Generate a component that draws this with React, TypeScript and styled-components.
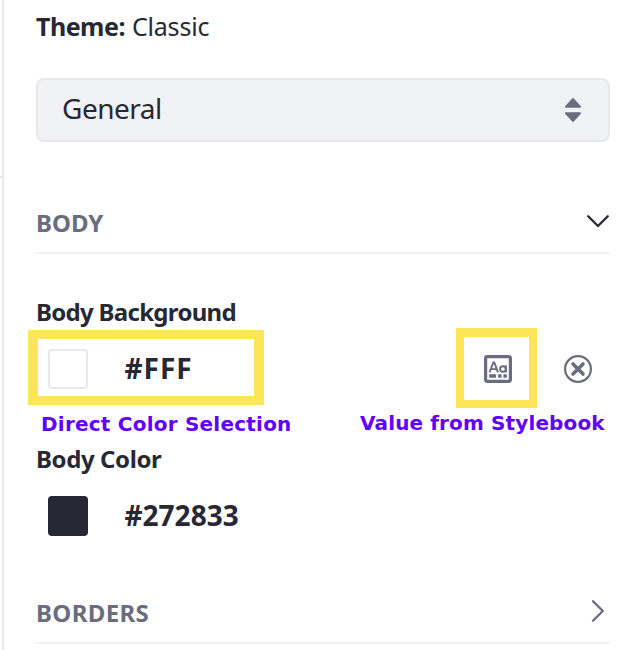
import React from 'react';
import styled, { createGlobalStyle } from 'styled-components';

const GlobalStyle = createGlobalStyle`
  * { box-sizing: border-box; }
  body { margin: 0; background: #fff; overflow: hidden; }
`;

const Page = styled.div`
  display: flex;
  width: 641px;
  height: 650px;
  overflow: hidden;
  background: #fff;
  color: #272833;
  font-family: 'Noto Sans', sans-serif;
`;

const Gutter = styled.div`
  width: 4px;
  flex: none;
  padding-top: 176px;
  border-right: 2px solid #e7e7ed;
`;

const GutterTick = styled.div`
  height: 2px;
  background: #e7e7ed;
`;

const Panel = styled.main`
  position: relative;
  flex: 1;
  display: flex;
  flex-direction: column;
  padding: 0 31px 0 32px;
`;

const Theme = styled.p`
  margin: 0;
  height: 78px;
  padding-top: 9px;
  display: flex;
  gap: 7px;
  font-size: 25px;
  line-height: 34px;
  letter-spacing: -0.2px;
`;

const ThemeLabel = styled.strong`
  letter-spacing: -0.5px;
`;

const Select = styled.button`
  display: flex;
  align-items: center;
  justify-content: space-between;
  height: 64px;
  flex: none;
  padding: 0 27px 4px 24px;
  border: 2px solid #e7e7ed;
  border-radius: 8px;
  background: #f1f2f5;
  color: inherit;
  font: 400 28px/40px 'Noto Sans', sans-serif;
  letter-spacing: -0.5px;
  svg { margin-top: 4px; }
`;

const SectionHeader = styled.h2<{ $space: number }>`
  display: flex;
  justify-content: space-between;
  flex: none;
  margin: ${(p) => p.$space}px 0 0;
  height: 48px;
  border-bottom: 2px solid #f1f2f5;
  color: #6b6c7e;
  font-size: 24px;
  font-weight: 700;
  line-height: 34px;
`;

const Spaced = styled.span<{ $spacing: number }>`
  letter-spacing: ${(p) => p.$spacing}px;
`;

const Field = styled.section<{ $space: number }>`
  margin-top: ${(p) => p.$space}px;
  flex: none;
`;

const FieldLabel = styled.div<{ $spacing: number }>`
  height: 52px;
  font-size: 24px;
  font-weight: 700;
  line-height: 30px;
  letter-spacing: ${(p) => p.$spacing}px;
`;

const ColorRow = styled.div`
  display: flex;
  align-items: center;
  height: 40px;
  padding: 0 18px 0 12px;
`;

const Swatch = styled.span<{ $color: string; $border: string }>`
  width: 40px;
  height: 40px;
  border: 2px solid ${(p) => p.$border};
  border-radius: 4px;
  background: ${(p) => p.$color};
`;

const Hex = styled.span<{ $spacing: number }>`
  flex: 1;
  padding: 0 0 2px 36.5px;
  font-size: 28px;
  font-weight: 700;
  line-height: 38px;
  letter-spacing: ${(p) => p.$spacing}px;
`;

const Actions = styled.div`
  display: flex;
  gap: 52px;
`;

const Highlight = styled.div<{ $x: number; $y: number; $w: number; $h: number; $border: string }>`
  position: absolute;
  left: ${(p) => p.$x}px;
  top: ${(p) => p.$y}px;
  width: ${(p) => p.$w}px;
  height: ${(p) => p.$h}px;
  border: solid #fde55a;
  border-width: ${(p) => p.$border};
`;

const Note = styled.span<{ $x: number; $y: number; $spacing: number }>`
  position: absolute;
  left: ${(p) => p.$x}px;
  top: ${(p) => p.$y}px;
  color: #6200ff;
  font: 700 20px/24px 'DejaVu Sans', sans-serif;
  letter-spacing: ${(p) => p.$spacing}px;
  white-space: nowrap;
`;

const SortIcon = () => (
  <svg width="16" height="24" viewBox="0 0 16 24" fill="#6b6c7e">
    <path d="M7.2.5Q8-.3 8.8.5L15.7 8Q16.5 9.8 15 9.8H1Q-.5 9.8.3 8Z" />
    <path d="M7.2 23.5Q8 24.3 8.8 23.5L15.7 16Q16.5 14.2 15 14.2H1Q-.5 14.2.3 16Z" />
  </svg>
);

const ChevronDown = () => (
  <svg width="24" height="34" viewBox="0 0 24 34" fill="none" stroke="#272833" strokeWidth="2.3" strokeLinecap="round" strokeLinejoin="round">
    <path d="M2.2 10.2 12 20 21.8 10.2" />
  </svg>
);

const ChevronRight = () => (
  <svg width="24" height="34" viewBox="0 0 24 34" fill="none" stroke="#6b6c7e" strokeWidth="2.3" strokeLinecap="round" strokeLinejoin="round">
    <path d="M7 5.2 16.8 15 7 24.8" />
  </svg>
);

const StylebookIcon = () => (
  <svg width="28" height="28" viewBox="0 0 28 28" fill="none" stroke="#6b6c7e">
    <rect x="1.6" y="1.6" width="24.8" height="24.8" rx="1.8" strokeWidth="3.2" />
    <path d="M5.6 17.4 9.3 7.4h1L14 17.4M7 14.1h5.8" strokeWidth="1.9" />
    <circle cx="18.9" cy="14" r="2.8" strokeWidth="1.9" />
    <path d="M21.9 10.3v7.2" strokeWidth="1.9" />
    <path d="M5.2 21H12M14.2 21h3.4M19.4 21h3.4" strokeWidth="3.4" />
  </svg>
);

const ClearIcon = () => (
  <svg width="28" height="28" viewBox="0 0 28 28" fill="none" stroke="#6b6c7e" strokeLinecap="round">
    <circle cx="14" cy="14" r="12.9" strokeWidth="2.2" />
    <path d="m9 9 10 10M19 9 9 19" strokeWidth="3.6" />
  </svg>
);

export default function App() {
  return (
    <>
      <GlobalStyle />
      <Page>
        <Gutter><GutterTick /></Gutter>
        <Panel>
          <Theme><ThemeLabel>Theme:</ThemeLabel><span>Classic</span></Theme>
          <Select type="button">General<SortIcon /></Select>
          <SectionHeader $space={64}>
            <Spaced $spacing={0}>BODY</Spaced>
            <ChevronDown />
          </SectionHeader>
          <Field $space={43}>
            <FieldLabel $spacing={-0.7}>Body Background</FieldLabel>
            <ColorRow>
              <Swatch $color="#fff" $border="#e7e7ed" />
              <Hex $spacing={1}>#FFF</Hex>
              <Actions><StylebookIcon /><ClearIcon /></Actions>
            </ColorRow>
          </Field>
          <Field $space={55}>
            <FieldLabel $spacing={-0.4}>Body Color</FieldLabel>
            <ColorRow>
              <Swatch $color="#272833" $border="#272833" />
              <Hex $spacing={0}>#272833</Hex>
            </ColorRow>
          </Field>
          <SectionHeader $space={60}>
            <Spaced $spacing={0.35}>BORDERS</Spaced>
            <ChevronRight />
          </SectionHeader>
          <Highlight $x={24} $y={330} $w={236} $h={75} $border="9px 10px" />
          <Highlight $x={452} $y={328} $w={81} $h={80} $border="9px 8px 8px" />
          <Note $x={37} $y={412} $spacing={0.22}>Direct Color Selection</Note>
          <Note $x={356} $y={411} $spacing={0.13}>Value from Stylebook</Note>
        </Panel>
      </Page>
    </>
  );
}
